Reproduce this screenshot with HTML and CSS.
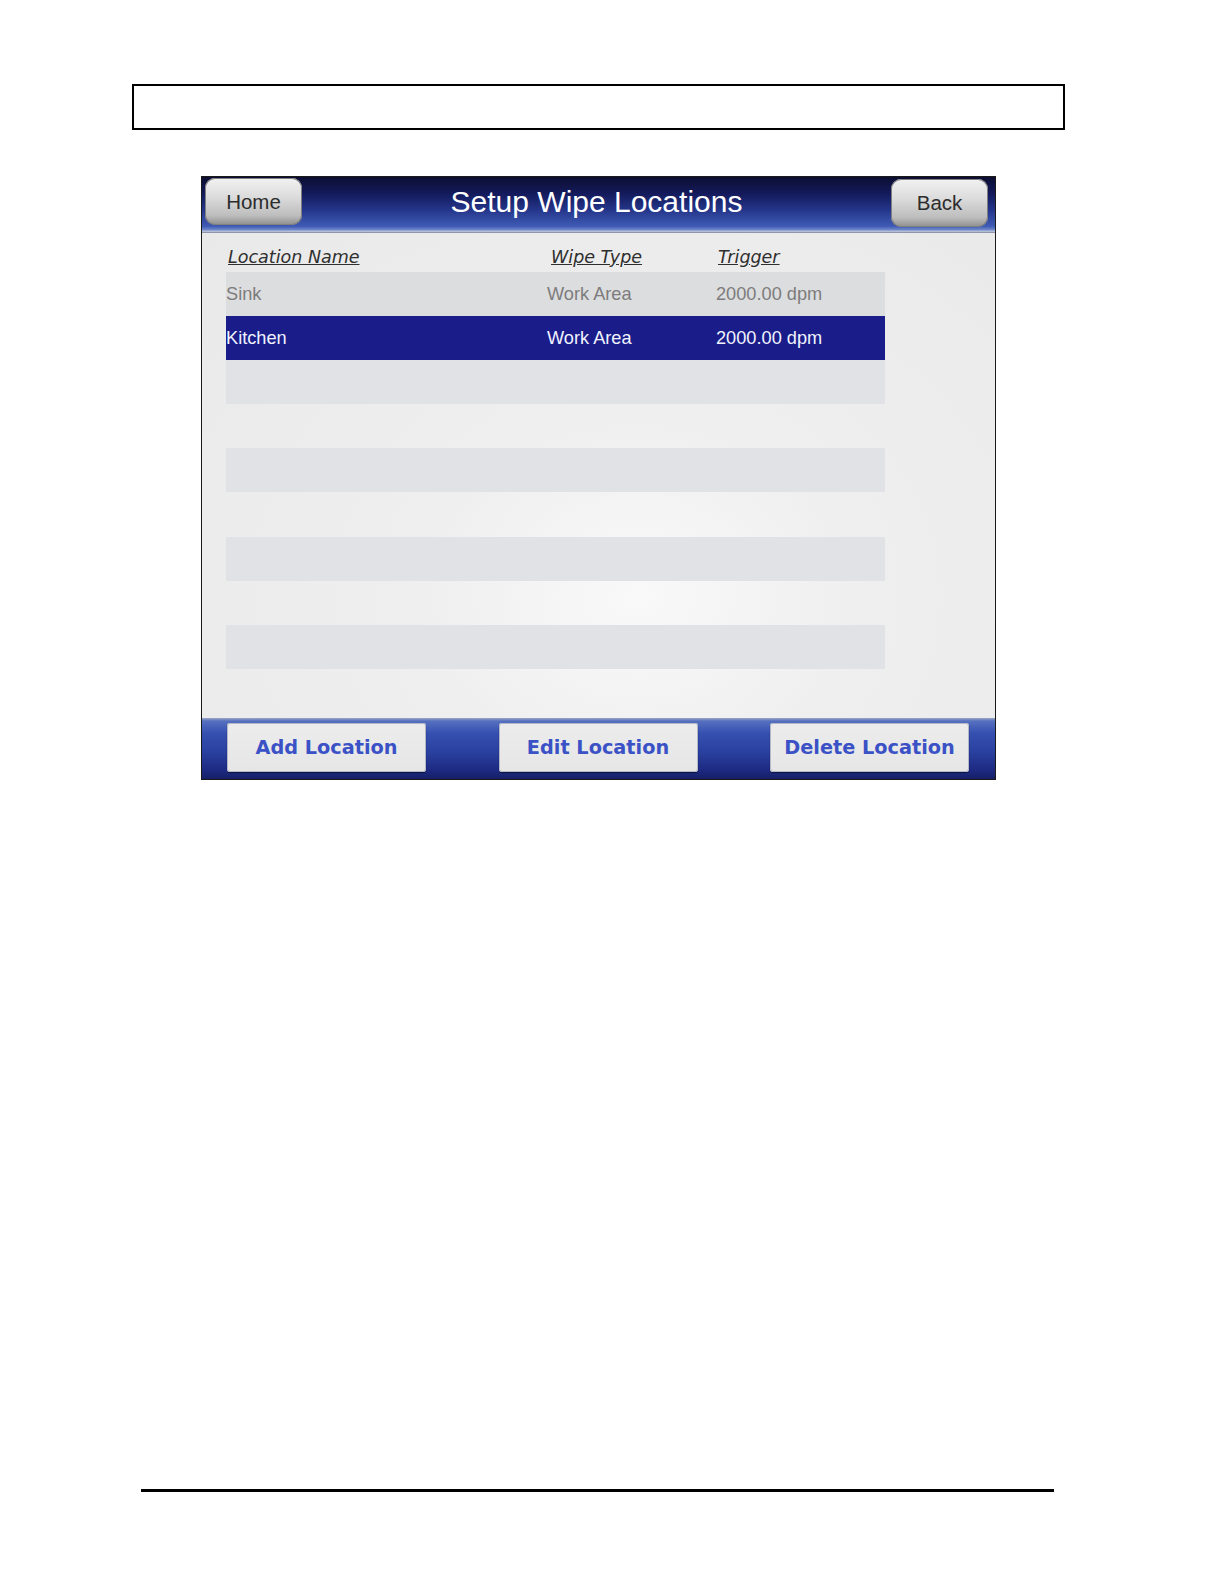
FILE: index.html
```html
<!DOCTYPE html>
<html>
<head>
<meta charset="utf-8">
<link rel="stylesheet" href="styles.css">
</head>
<body>
<div class="page">
  <div class="header-box"></div>
  <div class="screen">
    <div class="titlebar">
      <div class="tbtn">Home</div>
      <div class="title">Setup Wipe Locations</div>
      <div class="tbtn back">Back</div>
    </div>
    <div class="content">
      <div class="table">
        <div class="thead">
          <span class="c1">Location Name</span>
          <span class="c2">Wipe Type</span>
          <span class="c3">Trigger</span>
        </div>
        <div class="row first"><span class="c1">Sink</span><span class="c2">Work Area</span><span class="c3">2000.00 dpm</span></div>
        <div class="row sel"><span class="c1">Kitchen</span><span class="c2">Work Area</span><span class="c3">2000.00 dpm</span></div>
        <div class="row band"></div>
        <div class="row"></div>
        <div class="row band"></div>
        <div class="row"></div>
        <div class="row band"></div>
        <div class="row"></div>
        <div class="row band"></div>
      </div>
    </div>
    <div class="footer">
      <div class="fbtn">Add Location</div>
      <div class="fbtn">Edit Location</div>
      <div class="fbtn">Delete Location</div>
    </div>
  </div>
  <div class="rule"></div>
</div>
</body>
</html>
```

FILE: styles.css
```css
html, body {
  margin: 0;
  padding: 0;
  background: #ffffff;
  font-family: "Liberation Sans", Arial, sans-serif;
}

.page {
  padding-top: 84px;
  padding-bottom: 40px;
}

.header-box {
  margin-left: 132px;
  width: 933px;
  height: 46px;
  border: 2px solid #000;
  box-sizing: border-box;
}

.screen {
  margin-top: 46px;
  margin-left: 201px;
  width: 795px;
  height: 604px;
  border: 1px solid #1a1a1a;
  box-sizing: border-box;
  display: flex;
  flex-direction: column;
  background: #ebebeb;
}

.titlebar {
  height: 56px;
  flex: none;
  display: flex;
  align-items: flex-start;
  justify-content: space-between;
  padding: 1px 7px 0 3px;
  box-sizing: border-box;
  background: linear-gradient(to bottom, #0c0e30 0%, #141a5c 30%, #25378c 60%, #3f5bb4 88%, #6d86c8 94%, #b9c4dc 97%, #7c8194 100%);
}

.tbtn {
  width: 97px;
  height: 47px;
  border-radius: 10px;
  background: linear-gradient(to bottom, #f2f2f2 0%, #dcdcdc 40%, #bdbdbd 80%, #8e8e8e 100%);
  box-shadow: inset 0 0 0 1px #7f7f7f;
  color: #2c2c2c;
  font-size: 20.5px;
  display: flex;
  align-items: center;
  justify-content: center;
}

.tbtn.back {
  margin-top: 1px;
  height: 48px;
}

.title {
  color: #ffffff;
  font-size: 30px;
  line-height: 1;
  padding-top: 9px;
}

.content {
  flex: 1;
  padding: 0 0 0 24px;
  background: radial-gradient(ellipse at 55% 75%, #f9f9f9 0%, #efefef 35%, #e9e9e9 100%);
}

.table {
  width: 659px;
}

.thead {
  height: 39px;
  display: flex;
  align-items: center;
  padding-top: 8px;
  box-sizing: border-box;
  font-family: "DejaVu Sans", sans-serif;
  font-style: italic;
  text-decoration: underline;
  color: #2f2f2f;
  font-size: 17.5px;
}

.thead .c1 { width: 321px; padding-left: 2px; box-sizing: border-box; }
.thead .c2 { width: 169px; padding-left: 4px; box-sizing: border-box; }
.thead .c3 { padding-left: 2px; }

.row {
  height: 44.1px;
  display: flex;
  align-items: center;
  font-size: 18.2px;
  color: #7c7c7c;
}

.row .c1 { width: 321px; }
.row .c2 { width: 169px; }

.row.first {
  background: #dcdddf;
}

.row.band {
  background: #e0e2e6;
}

.row.sel {
  background: #1a1d89;
  color: #f0f2ff;
}

.footer {
  height: 61px;
  flex: none;
  display: flex;
  justify-content: space-between;
  align-items: flex-start;
  padding: 5px 26px 0 25px;
  box-sizing: border-box;
  background: linear-gradient(to bottom, #9aa6c4 0%, #5670c0 5%, #3550b0 25%, #2a41a0 55%, #1d2a82 85%, #161f66 100%);
}

.fbtn {
  width: 199px;
  height: 49px;
  border-radius: 3px;
  background: linear-gradient(to bottom, #ececec 0%, #e6e6e6 100%);
  box-shadow: inset 0 0 0 1px #b4b8c6, 0 1px 1px #0c1240;
  color: #3b51c6;
  font-family: "DejaVu Sans", sans-serif;
  font-weight: bold;
  font-size: 19.3px;
  display: flex;
  align-items: center;
  justify-content: center;
}

.rule {
  margin-top: 709px;
  margin-left: 141px;
  width: 913px;
  height: 3px;
  background: #000;
}
```
